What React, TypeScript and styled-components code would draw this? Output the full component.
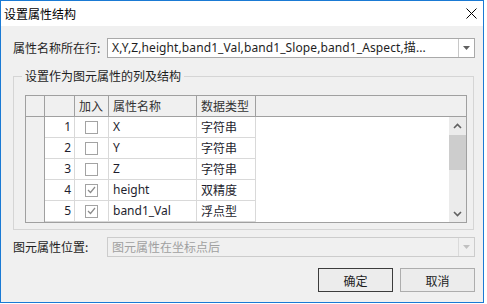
import React from "react";
import styled, { createGlobalStyle } from "styled-components";

const GlobalStyle = createGlobalStyle`
  html, body {
    margin: 0;
    padding: 0;
    background: #ffffff;
  }
  body {
    font-family: "Noto Sans", "Noto Sans CJK SC", sans-serif;
    font-size: 12px;
    color: #1e1e1e;
  }
`;

const Window = styled.div`
  width: 484px;
  height: 303px;
  box-sizing: border-box;
  border: 1px solid #1a7ad4;
  background: #f0f0f0;
  display: flex;
  flex-direction: column;
`;

const TitleBar = styled.div`
  height: 25px;
  background: #ffffff;
  display: flex;
  align-items: center;
  justify-content: space-between;
  padding-left: 3px;
`;

const Title = styled.span`
  font-family: "Noto Sans CJK SC", sans-serif;
  font-size: 12px;
  color: #000;
  line-height: 16px;
`;

const CloseButton = styled.div`
  width: 24px;
  height: 25px;
  display: flex;
  align-items: center;
  justify-content: center;
`;

const Body = styled.div`
  flex: 1;
  display: flex;
  flex-direction: column;
  padding: 12px 8px 0 12px;
`;

const FieldRow = styled.div<{ $gap?: number }>`
  display: flex;
  align-items: center;
  margin-top: ${(p) => p.$gap ?? 0}px;
`;

const FieldLabel = styled.span`
  width: 94px;
  font-family: "Noto Sans CJK SC", sans-serif;
  color: #1e1e1e;
  line-height: 16px;
`;

const Combo = styled.div<{ $disabled?: boolean }>`
  flex: 1;
  height: 20px;
  box-sizing: border-box;
  border: 1px solid ${(p) => (p.$disabled ? "#cccccc" : "#a9a9a9")};
  background: ${(p) => (p.$disabled ? "#f0f0f0" : "#ffffff")};
  display: flex;
  align-items: stretch;
`;

const ComboText = styled.span<{ $disabled?: boolean }>`
  flex: 1;
  padding-left: 4px;
  line-height: 18px;
  white-space: nowrap;
  overflow: hidden;
  letter-spacing: ${(p) => (p.$disabled ? "0" : "0.1px")};
  font-family: ${(p) =>
    p.$disabled ? `"Noto Sans CJK SC", sans-serif` : `"Noto Sans", "Noto Sans CJK SC", sans-serif`};
  color: ${(p) => (p.$disabled ? "#a0a0a0" : "#1e1e1e")};
`;

const ComboArrow = styled.span<{ $disabled?: boolean }>`
  width: 15px;
  border-left: 1px solid ${(p) => (p.$disabled ? "#dadada" : "#c8c8c8")};
  display: flex;
  align-items: center;
  justify-content: center;
`;

const Group = styled.fieldset`
  margin: 10px 1px 0 0;
  padding: 11px 6px 6px 11px;
  border: 1px solid #d5d5d5;
  min-width: 0;
`;

const Legend = styled.legend`
  padding: 0 3px;
  margin-left: -3px;
  font-family: "Noto Sans CJK SC", sans-serif;
  line-height: 16px;
  color: #1e1e1e;
`;

const Grid = styled.div`
  width: 442px;
  box-sizing: border-box;
  border: 1px solid #a0a0a0;
  background: #ffffff;
`;

const columns = "19px 30px 34px 88px 59px 1fr";

const HeaderRow = styled.div`
  display: grid;
  grid-template-columns: ${columns};
  height: 21px;
  box-sizing: border-box;
  border-bottom: 1px solid #a0a0a0;
  background: #f0f0f0;
`;

const HeaderCell = styled.div<{ $last?: boolean }>`
  border-right: ${(p) => (p.$last ? "none" : "1px solid #a0a0a0")};
  padding-left: 4px;
  font-family: "Noto Sans CJK SC", sans-serif;
  line-height: 20px;
  color: #333;
`;

const GridBody = styled.div`
  display: flex;
  height: 105px;
`;

const Rows = styled.div`
  flex: 1;
  display: flex;
  flex-direction: column;
`;

const Row = styled.div`
  display: grid;
  grid-template-columns: ${columns};
  height: 21px;
`;

const RowHead = styled.div`
  background: #f0f0f0;
  border-right: 1px solid #a0a0a0;
`;

const Cell = styled.div<{ $align?: "left" | "right" | "center"; $cjk?: boolean }>`
  border-right: 1px solid #d9d9d9;
  border-bottom: 1px solid #d9d9d9;
  display: flex;
  align-items: center;
  justify-content: ${(p) =>
    p.$align === "right" ? "flex-end" : p.$align === "center" ? "center" : "flex-start"};
  padding: ${(p) => (p.$align === "right" ? "0 3px 0 0" : p.$align === "center" ? "0" : "0 0 0 4px")};
  font-family: ${(p) =>
    p.$cjk ? `"Noto Sans CJK SC", sans-serif` : `"Noto Sans", "Noto Sans CJK SC", sans-serif`};
  color: #1e1e2e;
  line-height: 20px;
`;

const EmptyCell = styled.div``;

const CheckBox = styled.span`
  width: 13px;
  height: 13px;
  box-sizing: border-box;
  border: 1px solid #a3a3a3;
  background: #ffffff;
  display: flex;
  align-items: center;
  justify-content: center;
`;

const ScrollBar = styled.div`
  width: 17px;
  background: #ebebeb;
  display: flex;
  flex-direction: column;
`;

const ScrollArrow = styled.div`
  height: 17px;
  display: flex;
  align-items: center;
  justify-content: center;
`;

const ScrollTrack = styled.div`
  flex: 1;
  padding-top: 1px;
`;

const ScrollThumb = styled.div`
  height: 35px;
  background: #cdcdcd;
`;

const ButtonRow = styled.div`
  display: flex;
  justify-content: flex-end;
  gap: 7px;
  margin-top: 11px;
`;

const DialogButton = styled.button<{ $primary?: boolean }>`
  width: 75px;
  height: 24px;
  box-sizing: border-box;
  border: 1px solid ${(p) => (p.$primary ? "#3c3c3c" : "#adadad")};
  background: #ececec;
  font-family: "Noto Sans CJK SC", sans-serif;
  font-size: 12px;
  color: #1e1e1e;
  padding: 0;
`;

const Caret = ({ color }: { color: string }) => (
  <svg width="7" height="4" viewBox="0 0 7 4">
    <polygon points="0,0 7,0 3.5,4" fill={color} />
  </svg>
);

const Chevron = ({ up }: { up?: boolean }) => (
  <svg width="9" height="6" viewBox="0 0 9 6">
    <polyline
      points={up ? "1,5 4.5,1.5 8,5" : "1,1 4.5,4.5 8,1"}
      fill="none"
      stroke="#606060"
      strokeWidth="1.6"
    />
  </svg>
);

const Check = () => (
  <svg width="9" height="8" viewBox="0 0 9 8">
    <polyline points="1,4 3.5,6.5 8,1" fill="none" stroke="#8a8a8a" strokeWidth="1.2" />
  </svg>
);

const fields = [
  { name: "X", type: "字符串", checked: false },
  { name: "Y", type: "字符串", checked: false },
  { name: "Z", type: "字符串", checked: false },
  { name: "height", type: "双精度", checked: true },
  { name: "band1_Val", type: "浮点型", checked: true },
];

export default function App() {
  return (
    <>
      <GlobalStyle />
      <Window>
        <TitleBar>
          <Title>设置属性结构</Title>
          <CloseButton>
            <svg width="11" height="11" viewBox="0 0 11 11">
              <path d="M0.5 0.5 L10.5 10.5 M10.5 0.5 L0.5 10.5" stroke="#000" strokeWidth="1" />
            </svg>
          </CloseButton>
        </TitleBar>
        <Body>
          <FieldRow>
            <FieldLabel>属性名称所在行:</FieldLabel>
            <Combo>
              <ComboText>X,Y,Z,height,band1_Val,band1_Slope,band1_Aspect,描...</ComboText>
              <ComboArrow>
                <Caret color="#606060" />
              </ComboArrow>
            </Combo>
          </FieldRow>

          <Group>
            <Legend>设置作为图元属性的列及结构</Legend>
            <Grid>
              <HeaderRow>
                <HeaderCell />
                <HeaderCell />
                <HeaderCell>加入</HeaderCell>
                <HeaderCell>属性名称</HeaderCell>
                <HeaderCell>数据类型</HeaderCell>
                <HeaderCell $last />
              </HeaderRow>
              <GridBody>
                <Rows>
                  {fields.map((f, i) => (
                    <Row key={f.name}>
                      <RowHead />
                      <Cell $align="right">{i + 1}</Cell>
                      <Cell $align="center">
                        <CheckBox>{f.checked && <Check />}</CheckBox>
                      </Cell>
                      <Cell>{f.name}</Cell>
                      <Cell $cjk>{f.type}</Cell>
                      <EmptyCell />
                    </Row>
                  ))}
                </Rows>
                <ScrollBar>
                  <ScrollArrow>
                    <Chevron up />
                  </ScrollArrow>
                  <ScrollTrack>
                    <ScrollThumb />
                  </ScrollTrack>
                  <ScrollArrow>
                    <Chevron />
                  </ScrollArrow>
                </ScrollBar>
              </GridBody>
            </Grid>
          </Group>

          <FieldRow $gap={7}>
            <FieldLabel>图元属性位置:</FieldLabel>
            <Combo $disabled>
              <ComboText $disabled>图元属性在坐标点后</ComboText>
              <ComboArrow $disabled>
                <Caret color="#c0c0c0" />
              </ComboArrow>
            </Combo>
          </FieldRow>

          <ButtonRow>
            <DialogButton $primary>确定</DialogButton>
            <DialogButton>取消</DialogButton>
          </ButtonRow>
        </Body>
      </Window>
    </>
  );
}
